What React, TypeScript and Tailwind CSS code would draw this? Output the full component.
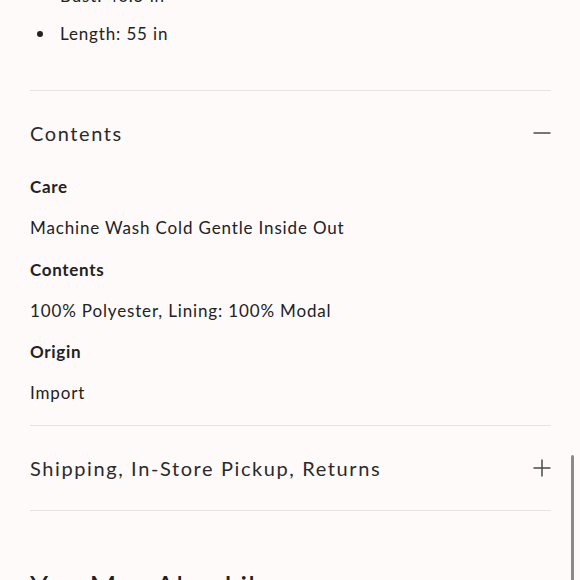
const specs = [
  { label: 'Care', value: 'Machine Wash Cold Gentle Inside Out' },
  { label: 'Contents', value: '100% Polyester, Lining: 100% Modal' },
  { label: 'Origin', value: 'Import' },
];

const Minus = () => (
  <svg width="18" height="18" viewBox="0 0 18 18" className="text-[#4a4a4a]">
    <path d="M0.5 9h17" stroke="currentColor" strokeWidth="1.5" />
  </svg>
);

const Plus = () => (
  <svg width="18" height="18" viewBox="0 0 18 18" className="text-[#4a4a4a]">
    <path d="M0.5 9h17M9 0.5v17" stroke="currentColor" strokeWidth="1.5" />
  </svg>
);

export default function App() {
  return (
    <div className="h-[580px] w-[580px] overflow-hidden bg-[#fdfaf9] font-['Lato',sans-serif] text-[#222] relative">
      <div className="-mt-[23px] pl-[30px] pr-[29px]">
        <ul className="pb-[37px]">
          {['Bust: 40.5 in', 'Length: 55 in'].map((item) => (
            <li key={item} className="flex h-[38px] items-center text-[17px] tracking-[0.05em]">
              <span className="ml-[7px] mr-[17px] h-[6px] w-[6px] rounded-full bg-[#222]"></span>
              {item}
            </li>
          ))}
        </ul>

        <div className="border-t border-[#e6e2df]">
          <div className="flex h-[84px] items-center justify-between">
            <h3 className="text-[20px] tracking-[0.08em] text-[#2a2a2a]">Contents</h3>
            <Minus />
          </div>
          <div className="pb-[2px]">
            {specs.map((s) => (
              <div key={s.label}>
                <p className="mb-[17.3px] text-[17px] font-bold leading-[24px] tracking-[0.04em]">{s.label}</p>
                <p className="mb-[17.3px] text-[17px] leading-[24px] tracking-[0.05em]">{s.value}</p>
              </div>
            ))}
          </div>
        </div>

        <div className="border-t border-[#e6e2df]">
          <div className="flex h-[84px] items-center justify-between">
            <h3 className="text-[20px] tracking-[0.08em] text-[#2a2a2a]">Shipping, In-Store Pickup, Returns</h3>
            <Plus />
          </div>
        </div>

        <div className="border-t border-[#e6e2df] pt-[57px]">
          <h2 className="text-[29px] leading-[36px] tracking-[0.04em] text-[#222]">You May Also Like</h2>
        </div>
      </div>

      <div className="absolute right-[6px] top-[455px] h-[140px] w-[3px] rounded-full bg-[#8a8a8a]"></div>
    </div>
  );
}
